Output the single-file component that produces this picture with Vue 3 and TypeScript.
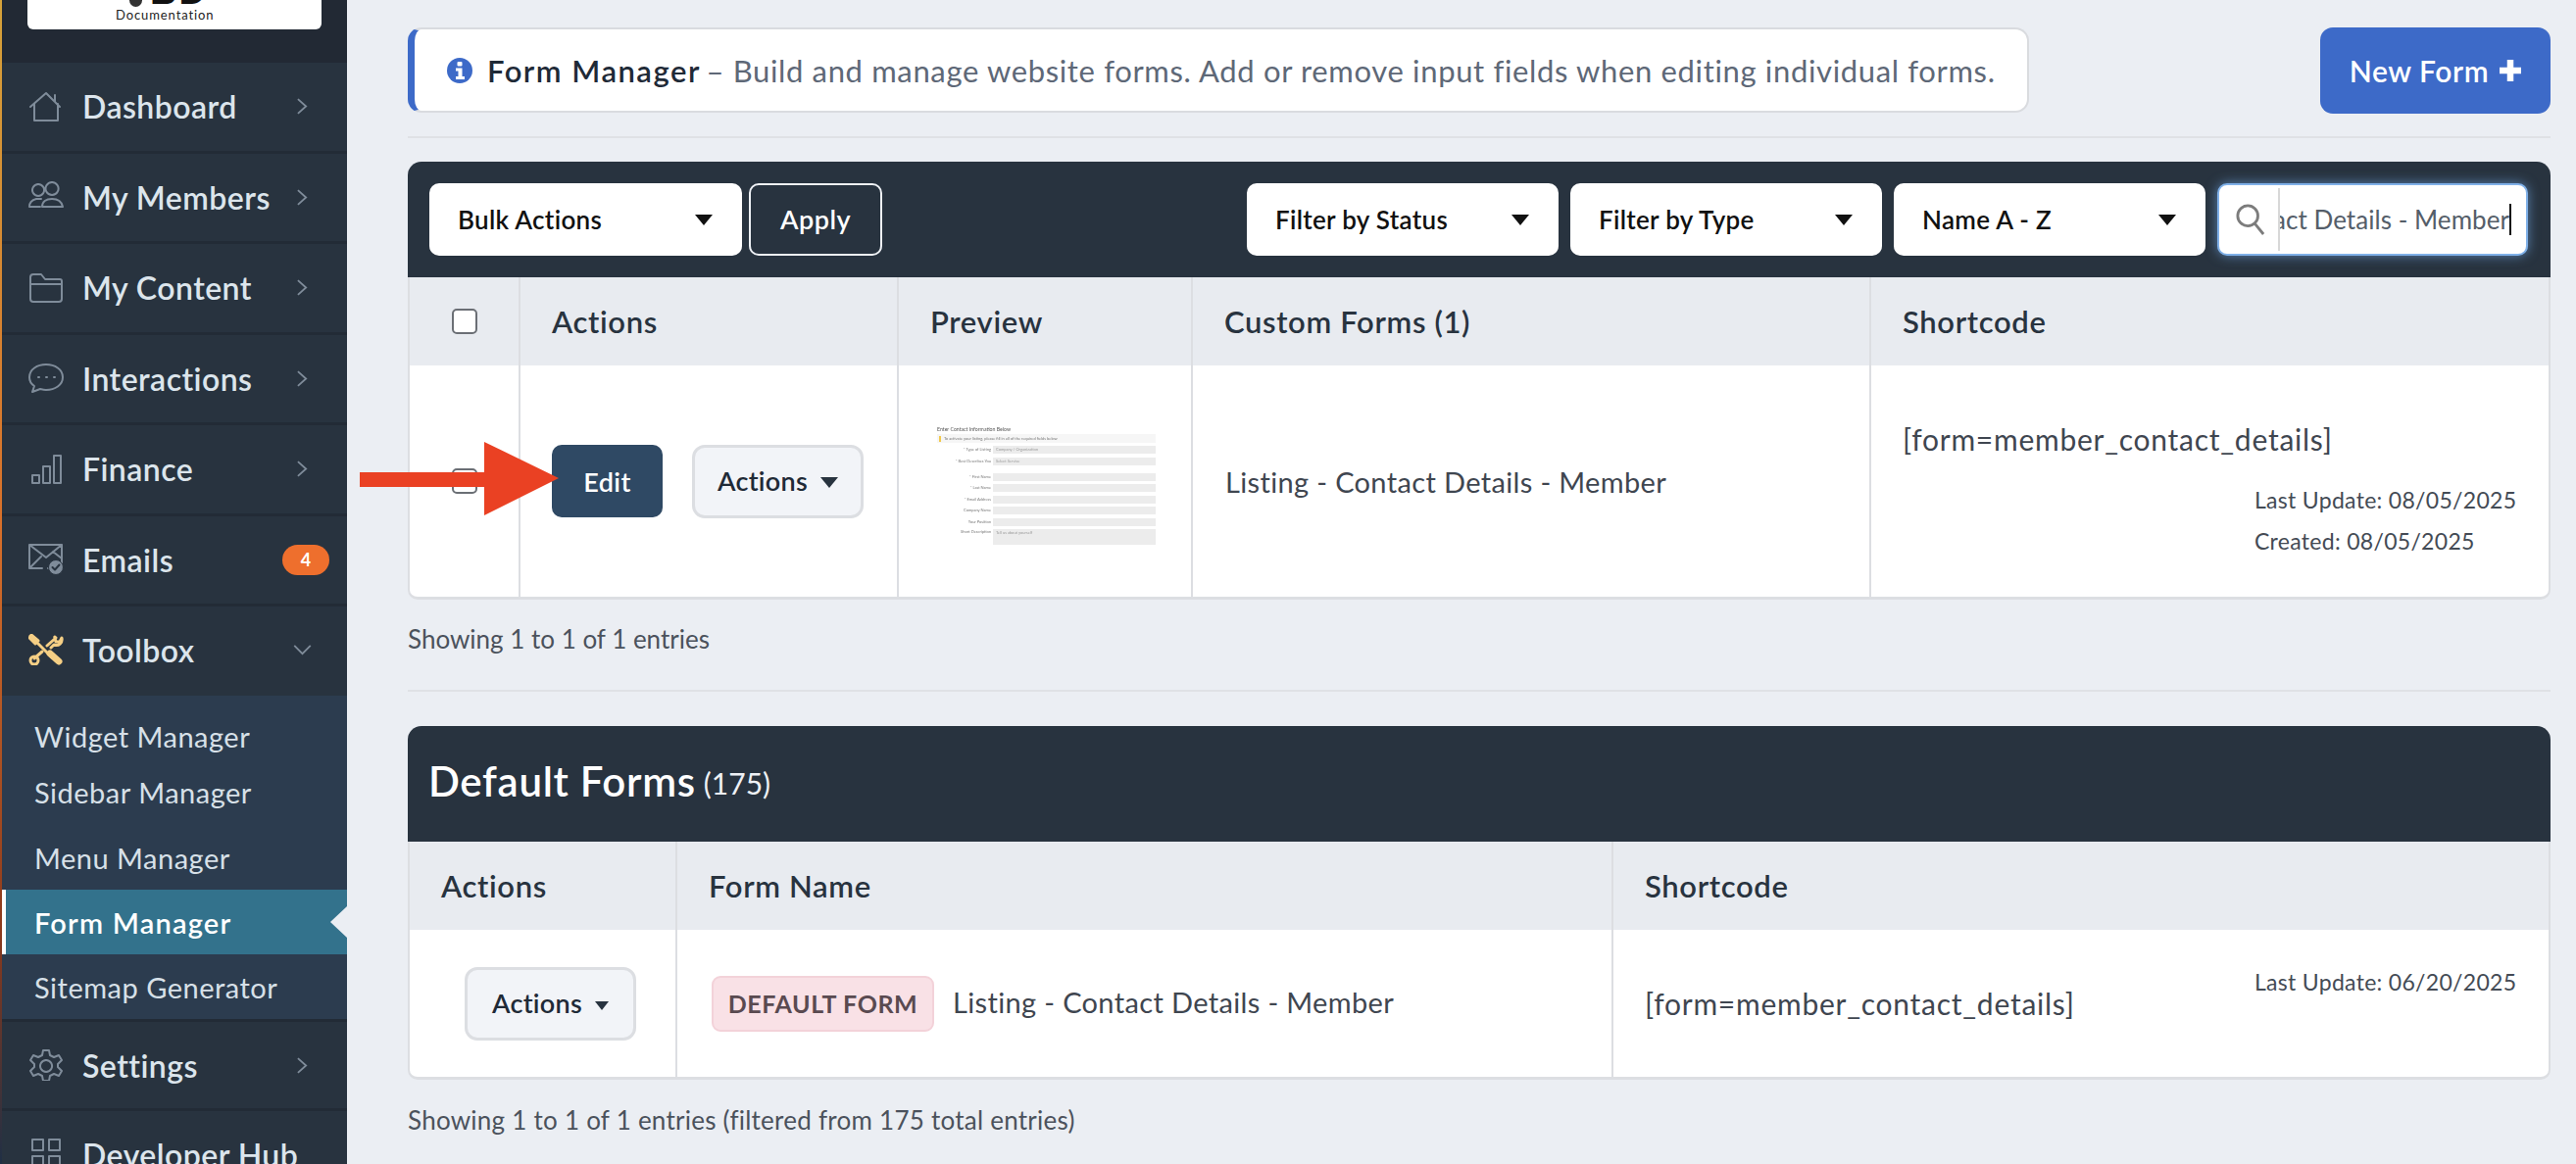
<script setup lang="ts">
interface NavItem { label: string; icon: string; badge?: string; check?: boolean }
const iconPaths: Record<string, string> = {
  house: 'M2 16 18 2l14 14M6 13v17h24V13M27 4v7',
  members: 'M10 3a6 6 0 1 0 .1 0M24 1a6.500 6.500 0 1 0 .1 0M1 26c0-4 3-7 7-8h5M1 26h11M14 26c0-5 4-8 10-8s10 3 11 8H14Z',
  folder: 'M2 27V5a3 3 0 0 1 3-3h8l4 5h15a2 2 0 0 1 2 2v18a3 3 0 0 1-3 3H5a3 3 0 0 1-3-3ZM2 12h32',
  chat: 'M18 2C9 2 1 7 1 15c0 4 2 7 5 9l-2 6 8-3c2 .5 4 1 6 1 9 0 17-5 17-13S27 2 18 2ZM10 15h1M18 15h1M26 15h1',
  bars: 'M4 22h7v8H4zM15 13h7v17h-7zM26 2h7v28h-7z',
  mail: 'M1 1h33v24H20M14 25H1V1M1 1l17 13L34 1M1 25l12-12M34 15l-9-7',
  gear: 'M15 1h6l1 5 4 2 5-2 3 5-4 4v3l4 4-3 5-5-2-4 2-1 5h-6l-1-5-4-2-5 2-3-5 4-4v-3l-4-4 3-5 5 2 4-2 1-5ZM18 11a6 6 0 1 0 .1 0',
  grid: 'M4 1h11v11H4zM21 1h11v11H21zM4 18h11v11H4zM21 18h11v11H21z'
}
const topNav: NavItem[] = [
  { label: 'Dashboard', icon: iconPaths.house },
  { label: 'My Members', icon: iconPaths.members },
  { label: 'My Content', icon: iconPaths.folder },
  { label: 'Interactions', icon: iconPaths.chat },
  { label: 'Finance', icon: iconPaths.bars },
  { label: 'Emails', icon: iconPaths.mail, badge: '4', check: true }
]
const bottomNav: NavItem[] = [
  { label: 'Settings', icon: iconPaths.gear },
  { label: 'Developer Hub', icon: iconPaths.grid }
]
const subNav = ['Widget Manager', 'Sidebar Manager', 'Menu Manager', 'Form Manager', 'Sitemap Generator']
const filters = ['Filter by Status', 'Filter by Type', 'Name A - Z']
const thumbRows = [
  { label: '* Type of Listing', value: 'Company / Organization' },
  { label: '* Best Describes You', value: 'Select Service' },
  { label: '* First Name', value: '' },
  { label: '* Last Name', value: '' },
  { label: '* Email Address', value: '' },
  { label: 'Company Name', value: '' },
  { label: 'Your Position', value: '' }
]
</script>

<template>
  <div class="page">
    <aside class="sidebar">
      <div class="brand">
        <div class="logo">
          <div class="logo-mark"><span class="bee"></span><span class="bd">BD</span></div>
          <div class="logo-text">Documentation</div>
        </div>
      </div>
      <a v-for="item in topNav" :key="item.label" class="nav">
        <svg class="nav-icon" viewBox="0 0 36 32">
          <path :d="item.icon" />
          <template v-if="item.check">
            <circle class="check-dot" cx="28" cy="24" r="7.500" />
            <path class="check-mark" d="M24.500 24l2.500 2.500 4.500-5" />
          </template>
        </svg>
        <span class="nav-label">{{ item.label }}</span>
        <span v-if="item.badge" class="badge">{{ item.badge }}</span>
        <svg v-else class="chev" viewBox="0 0 12 18"><path d="M1 1l9 8-9 8" /></svg>
      </a>
      <a class="nav nav-open">
        <svg class="nav-icon tools" viewBox="0 0 36 32">
          <path d="M2 2l22 22M3 1 1 4l6 6 3-3Z" />
          <path class="thick" d="M22 20l9 8" />
          <path d="M14 18 6 25" />
          <circle cx="6" cy="27" r="4" />
          <path d="M19 12 28 4c-2-2-1 0-1 0l1 4 4 0 2-4c1 5-3 9-8 7l-3 3" />
        </svg>
        <span class="nav-label">Toolbox</span>
        <svg class="chev-down" viewBox="0 0 20 12"><path d="M1 1l9 9 9-9" /></svg>
      </a>
      <div class="sub">
        <a v-for="s in subNav" :key="s" class="sub-item" :class="{ active: s === 'Form Manager', wide: s === 'Menu Manager' }">{{ s }}</a>
      </div>
      <a v-for="item in bottomNav" :key="item.label" class="nav nav-low">
        <svg class="nav-icon" viewBox="0 0 36 32"><path :d="item.icon" /></svg>
        <span class="nav-label">{{ item.label }}</span>
        <svg v-if="item.label === 'Settings'" class="chev" viewBox="0 0 12 18"><path d="M1 1l9 8-9 8" /></svg>
      </a>
    </aside>

    <main class="main">
      <header class="top">
        <div class="notice">
          <svg class="info" viewBox="0 0 26 26"><circle cx="13" cy="13" r="13" /><rect x="10.500" y="4" width="5" height="4.500" rx="1" fill="#fff" /><path d="M9 10.500h6.500V19H18v3H9v-3h2.500v-5.500H9Z" fill="#fff" /></svg>
          <strong>Form Manager</strong><span class="notice-text">&nbsp;– Build and manage website forms. Add or remove input fields when editing individual forms.</span>
        </div>
        <button class="new-form"><span>New Form</span><svg class="plus" viewBox="0 0 22 22"><path d="M11 0v22M0 11h22" /></svg></button>
      </header>

      <hr class="rule rule-top" />

      <section class="panel">
        <div class="toolbar">
          <div class="select bulk"><span>Bulk Actions</span><i class="tri"></i></div>
          <button class="apply">Apply</button>
          <div class="filters">
            <div v-for="f in filters" :key="f" class="select"><span>{{ f }}</span><i class="tri"></i></div>
            <div class="search">
              <svg class="search-icon" viewBox="0 0 32 36"><circle cx="13" cy="14" r="11" /><path d="M21 23l9 11" /></svg>
              <div class="search-field"><span class="search-value">Listing - Contact Details - Member</span></div>
            </div>
          </div>
        </div>
        <div class="grid custom">
          <div class="th center"><span class="check"></span></div>
          <div class="th">Actions</div>
          <div class="th">Preview</div>
          <div class="th">Custom Forms (1)</div>
          <div class="th">Shortcode</div>

          <div class="td center"><span class="check"></span></div>
          <div class="td buttons">
            <button class="edit">Edit</button>
            <button class="act">Actions <i class="tri dark"></i></button>
          </div>
          <div class="td thumb-cell">
            <div class="thumb">
              <div class="thumb-title">Enter Contact Information Below</div>
              <div class="thumb-alert"><i></i>To activate your listing, please fill in all of the required fields below</div>
              <div v-for="r in thumbRows" :key="r.label" class="thumb-row">
                <span class="thumb-label">{{ r.label }}</span><span class="thumb-input">{{ r.value }}</span>
              </div>
              <div class="thumb-row area"><span class="thumb-label">Short Description</span><span class="thumb-input">Tell us about yourself</span></div>
            </div>
          </div>
          <div class="td name">Listing - Contact Details - Member</div>
          <div class="td code-cell">
            <div class="code">[form=member_contact_details]</div>
            <div class="dates">
              <div>Last Update: 08/05/2025</div>
              <div>Created: 08/05/2025</div>
            </div>
          </div>
        </div>
      </section>

      <p class="count count-one">Showing 1 to 1 of 1 entries</p>
      <hr class="rule rule-mid" />

      <section class="panel">
        <div class="panel-head"><h2>Default Forms</h2><span>(175)</span></div>
        <div class="grid defaults">
          <div class="th">Actions</div>
          <div class="th">Form Name</div>
          <div class="th">Shortcode</div>
          <div class="td action-cell"><button class="act">Actions <i class="tri dark small"></i></button></div>
          <div class="td name-cell"><span class="tag">DEFAULT FORM</span><span class="name name-up">Listing - Contact Details - Member</span></div>
          <div class="td default-code">
            <div class="code">[form=member_contact_details]</div>
            <div class="update">Last Update: 06/20/2025</div>
          </div>
        </div>
      </section>
      <p class="count count-two">Showing 1 to 1 of 1 entries (filtered from 175 total entries)</p>
    </main>

    <svg class="arrow" viewBox="0 0 204 76"><path d="M0 31h127V0l76 37-76 38V46H0Z" /></svg>
  </div>
</template>

<style>
html, body { margin: 0; height: 1188px; overflow: hidden; background: #ebeef3; }
</style>

<style scoped>
.page {
  position: relative;
  display: flex;
  height: 1188px;
  overflow: hidden;
  background: #ebeef3;
  color: #1f2a37;
  font-family: Lato, "Liberation Sans", sans-serif;
}
.sidebar {
  width: 352px;
  flex: none;
  height: 1188px;
  overflow: hidden;
  border-left: 2px solid;
  border-image: linear-gradient(#d6a23a, #d9702a 45%, #8c3a1c 80%, #1f2f45 100%) 1;
  background: #28333f;
}
.brand { height: 64px; background: #222934; padding-left: 26px; box-sizing: border-box; }
.logo {
  width: 300px;
  height: 30px;
  background: #fff;
  border-radius: 0 0 6px 6px;
  overflow: hidden;
  position: relative;
  text-align: center;
  color: #222;
}
.logo-mark { position: absolute; left: 104px; top: -25px; display: flex; align-items: flex-end; height: 32px; }
.bee { width: 13px; height: 7px; background: #333; border-radius: 0 0 7px 7px; margin-right: 8px; }
.bd { font: 700 38px/32px "Liberation Sans", sans-serif; letter-spacing: 2px; color: #111; }
.logo-text { position: absolute; left: 90px; top: 7px; font-size: 13px; line-height: 16px; letter-spacing: .9px; }
.nav {
  height: 92.500px;
  box-sizing: border-box;
  display: flex;
  align-items: center;
  padding-left: 27px;
  border-bottom: 3px solid #222b36;
  position: relative;
}
.nav-open { height: 91px; border-bottom: 0; padding-bottom: 3px; }
.nav-low { height: 91px; }
.nav-icon { width: 36px; height: 32px; flex: none; fill: none; stroke: #7f8c9a; stroke-width: 2; stroke-linejoin: round; stroke-linecap: round; }
.check-dot { fill: #7f8c9a; stroke: #28333f; stroke-width: 1; }
.check-mark { stroke: #28333f; stroke-width: 2; }
.tools { stroke: #f5cf85; stroke-width: 3; }
.tools .thick { stroke-width: 7; }
.nav-label { margin-left: 19px; font-size: 32px; font-weight: 600; color: #dce5ec; letter-spacing: .45px; white-space: nowrap; }
.chev { position: absolute; left: 301px; width: 11px; height: 17px; fill: none; stroke: #7f8c9a; stroke-width: 2; }
.chev-down { position: absolute; left: 297px; width: 19px; height: 11px; fill: none; stroke: #7f8c9a; stroke-width: 2; }
.badge {
  position: absolute;
  left: 286px;
  width: 48px;
  height: 31px;
  border-radius: 16px;
  background: #ee6f2d;
  color: #fff;
  font-size: 18px;
  font-weight: 700;
  line-height: 31px;
  text-align: center;
}
.sub { background: #2c3c4f; border-bottom: 3px solid #222b36; height: 333px; box-sizing: border-box; padding-top: 13px; }
.sub-item {
  display: flex;
  align-items: center;
  box-sizing: border-box;
  height: 57px;
  padding-left: 33px;
  font-size: 29px;
  color: #d7e0e8;
  letter-spacing: .5px;
}
.sub-item.wide { height: 71px; padding-top: 5px; }
.sub-item.active {
  position: relative;
  height: 66px;
  padding-left: 29px;
  border-left: 4px solid #fff;
  background: #33728c;
  color: #fff;
  font-weight: 600;
  letter-spacing: 1.200px;
}
.sub-item.active::after {
  content: "";
  position: absolute;
  right: 0;
  top: 17px;
  border: 16px solid transparent;
  border-left: 0;
  border-right: 17px solid #ebeef3;
}
.sub-item.active + .sub-item { height: 67px; }
.main { flex: 1; min-width: 0; padding: 28px 26px 0 62px; }
.top { display: flex; justify-content: space-between; height: 88px; }
.notice {
  width: 1654px;
  box-sizing: border-box;
  height: 87px;
  display: flex;
  align-items: center;
  background: #fff;
  border: 2px solid #d9dbdf;
  border-left: 7px solid #3d6ac8;
  border-radius: 14px;
  padding-left: 33px;
  font-size: 31px;
  white-space: nowrap;
}
.info { width: 26px; height: 26px; margin-right: 15px; flex: none; fill: #3d6ac8; }
.notice strong { font-weight: 600; letter-spacing: 1.500px; }
.notice-text { color: #5e6877; letter-spacing: .65px; margin-left: -3px; }
.new-form {
  width: 235px;
  height: 88px;
  display: flex;
  align-items: center;
  justify-content: center;
  gap: 11px;
  border: 0;
  border-radius: 13px;
  background: #3d6ac8;
  color: #fff;
  font: 600 30px Lato, sans-serif;
  letter-spacing: .6px;
}
.plus { width: 22px; height: 22px; fill: none; stroke: #fff; stroke-width: 6.500; }
.rule { border: 0; height: 2px; background: #dfe1e5; margin: 0; }
.rule-top { margin: 23px 0 24px; }
.rule-mid { margin: 36px 0 35px; }
.panel { border-radius: 14px 14px 0 0; overflow: hidden; }
.toolbar {
  height: 118px;
  box-sizing: border-box;
  display: flex;
  align-items: center;
  background: #28333f;
  padding: 0 23px 0 22px;
}
.select {
  width: 318px;
  height: 74px;
  box-sizing: border-box;
  display: flex;
  align-items: center;
  justify-content: space-between;
  background: #fff;
  border-radius: 10px;
  padding: 0 30px 0 29px;
  color: #111;
  font-size: 26px;
  font-weight: 600;
  letter-spacing: .3px;
}
.bulk { width: 319px; }
.tri { display: inline-block; border: 9px solid transparent; border-top: 11px solid #111; border-bottom: 0; }
.tri.dark { border-top-color: #28333f; margin-left: 6px; vertical-align: 3px; }
.tri.small { border-width: 7px; border-top-width: 9px; border-bottom-width: 0; }
.apply {
  width: 136px;
  height: 74px;
  margin-left: 7px;
  padding-bottom: 3px;
  background: #28333f;
  border: 2px solid #eef1f5;
  border-radius: 10px;
  color: #fff;
  font: 600 27px Lato, sans-serif;
  letter-spacing: .5px;
}
.filters { display: flex; margin-left: auto; gap: 12px; }
.search {
  width: 317px;
  height: 74px;
  box-sizing: border-box;
  display: flex;
  align-items: center;
  background: #fff;
  border: 2px solid #7fb0e8;
  border-radius: 10px;
  box-shadow: 0 0 12px rgba(115, 170, 235, .65);
  padding-left: 17px;
  position: relative;
}
.search-icon { width: 30px; height: 34px; flex: none; fill: none; stroke: #7c7c7c; stroke-width: 3; }
.search-field {
  width: 227px;
  height: 64px;
  margin-left: 13px;
  padding-left: 9px;
  border-left: 2px solid #d8d8d8;
  display: flex;
  justify-content: flex-end;
  align-items: center;
  overflow: hidden;
  font-size: 26px;
  color: #555e69;
  white-space: nowrap;
  letter-spacing: .05px;
}
.search-value { border-right: 2px solid #111; flex: none; }
.grid { display: grid; background: #fff; border: solid #dcdee2; border-width: 0 2px 3px; border-radius: 0 0 10px 10px; }
.custom { grid-template-columns: 111px 386px 300px 692px 1fr; grid-template-rows: 90px 236px; }
.defaults { grid-template-columns: 271px 955px 1fr; grid-template-rows: 90px 150px; }
.th {
  display: flex;
  align-items: center;
  background: #e8ebf0;
  border-left: 2px solid #dcdee2;
  padding-left: 32px;
  font-size: 31px;
  font-weight: 600;
  color: #28333f;
  letter-spacing: .65px;
}
.th:first-child { border-left: 0; }
.td { display: flex; align-items: center; border-left: 2px solid #dcdee2; padding-left: 33px; min-width: 0; }
.custom .td:nth-child(6), .defaults .td:nth-child(4) { border-left: 0; }
.center { justify-content: center; padding-left: 0; }
.action-cell { justify-content: center; padding-left: 16px; }
.check { width: 26px; height: 26px; box-sizing: border-box; border: 2px solid #6b6f75; border-radius: 5px; background: #fff; }
.buttons { gap: 30px; padding-left: 32px; }
.edit {
  width: 113px;
  height: 74px;
  border: 0;
  border-radius: 10px;
  background: #2f4964;
  color: #fff;
  font: 600 27px Lato, sans-serif;
  letter-spacing: .4px;
}
.act {
  width: 175px;
  height: 75px;
  box-sizing: border-box;
  padding-bottom: 3px;
  background: #f2f4f8;
  border: 3px solid #dcdee2;
  border-radius: 13px;
  color: #1f2a37;
  font: 600 27px Lato, sans-serif;
  letter-spacing: .3px;
}
.thumb-cell { padding-left: 36px; }
.thumb {
  width: 226px;
  height: 132px;
  margin-top: 18px;
  font-size: 4px;
  line-height: 6px;
  color: #9a9a9a;
  filter: blur(.35px);
  white-space: nowrap;
  overflow: hidden;
}
.thumb-title { font-size: 5.200px; line-height: 8px; color: #555; margin-left: 3px; }
.thumb-alert { display: flex; align-items: center; height: 9px; margin: 1px 0 3px 3px; background: #f6f6f6; color: #777; }
.thumb-alert i { width: 2px; height: 6px; background: #f2c94c; margin: 0 3px 0 2px; }
.thumb-row { display: flex; height: 8px; margin-bottom: 3.500px; align-items: center; }
.thumb-row:nth-child(4) { margin-bottom: 8px; }
.thumb-label { width: 58px; text-align: right; color: #777; flex: none; }
.thumb-input { flex: 1; height: 8px; line-height: 8px; margin-left: 2px; background: #ececec; padding-left: 3px; }
.thumb-row.area { height: 16px; align-items: flex-start; }
.thumb-row.area .thumb-input { height: 16px; }
.name { font-size: 29px; color: #3f4650; letter-spacing: .35px; white-space: nowrap; }
.name-up { margin-bottom: 4px; }
.code-cell { position: relative; flex-direction: column; align-items: flex-start; padding: 59px 0 0 32px; justify-content: flex-start; box-sizing: border-box; }
.code { font-size: 30px; line-height: 32px; color: #3f4650; letter-spacing: .75px; white-space: nowrap; }
.dates { align-self: flex-end; width: 300px; margin-top: 25px; font-size: 23px; line-height: 42px; color: #444b55; letter-spacing: .3px; }
.name-cell { padding-left: 35px; }
.tag {
  flex: none;
  width: 227px;
  height: 57px;
  box-sizing: border-box;
  margin-right: 19px;
  background: #f9e1e6;
  border: 2px solid #f3d2d9;
  border-radius: 9px;
  text-align: center;
  line-height: 53px;
  color: #5a4a50;
  font-size: 25px;
  font-weight: 700;
  letter-spacing: .6px;
}
.default-code { position: relative; padding-left: 32px; }
.update { position: absolute; left: 654px; top: 38px; font-size: 23px; line-height: 30px; color: #444b55; letter-spacing: .3px; white-space: nowrap; }
.panel-head {
  height: 118px;
  box-sizing: border-box;
  display: flex;
  align-items: center;
  background: #28333f;
  padding: 0 0 6px 21px;
  color: #fff;
}
.panel-head h2 { margin: 0 8px 0 0; font-size: 42px; font-weight: 600; letter-spacing: .7px; }
.panel-head span { font-size: 30px; margin-top: 4px; color: #eef1f5; }
.count { margin: 0; font-size: 26px; line-height: 32px; color: #4b525c; }
.count-one { margin-top: 24px; }
.count-two { margin-top: 25px; letter-spacing: .25px; }
.arrow { position: absolute; left: 367px; top: 451px; width: 204px; height: 76px; fill: #ea4123; }
</style>
